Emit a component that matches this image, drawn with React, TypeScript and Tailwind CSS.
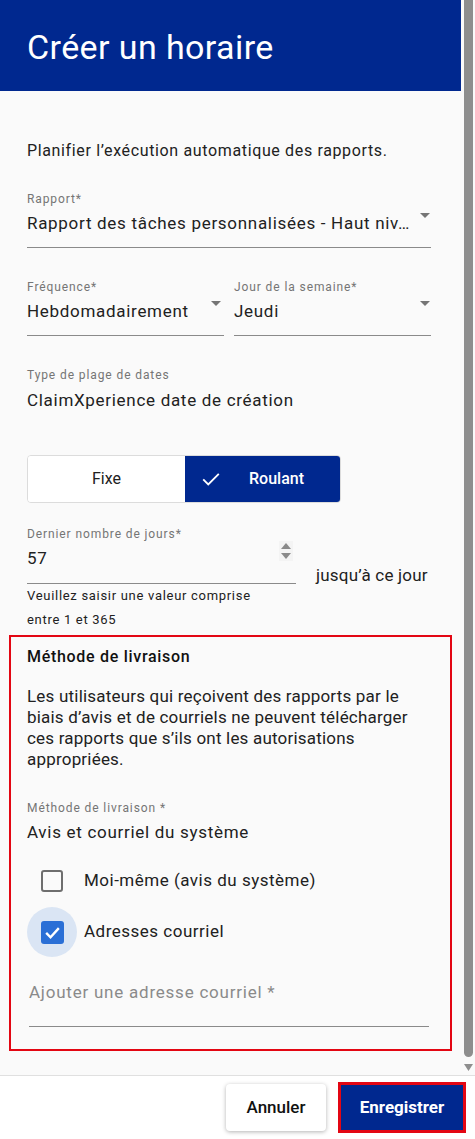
import React from "react";

const Caret = () => (
  <svg width="10" height="5" viewBox="0 0 10 5" className="shrink-0">
    <path d="M0 0 L10 0 L5 5 Z" fill="#757575" />
  </svg>
);

function SelectField({ label, value, className = "" }: { label: string; value: string; className?: string }) {
  return (
    <div className={"border-b border-[#8a8a8a] pb-[12px] " + className}>
      <div className="text-[12px] leading-[16px] tracking-[0.9px] text-[#757575]">{label}</div>
      <div className="mt-[4px] flex items-center justify-between gap-1">
        <span className="truncate text-[17px] leading-[24px] tracking-[0.7px] text-[#212121]">{value}</span>
        <span className="-mt-[16px] mr-[1px]"><Caret /></span>
      </div>
    </div>
  );
}

export default function App() {
  return (
    <div className="flex h-[1139px] w-[475px] flex-col bg-[#fafafa]" style={{ fontFamily: "Roboto, 'Noto Sans', sans-serif" }}>
      <div className="flex h-[1075px] flex-row">
        <div className="flex w-[461px] flex-col">
          <div className="flex h-[91px] items-center bg-[#00288f] pl-[27px] pt-[3px]">
            <h1 className="text-[34px] leading-[40px] font-normal tracking-[0.4px] text-white">Créer un horaire</h1>
          </div>
          <div className="flex flex-col pt-[48px]">
            <div className="px-[27px]">
              <p className="text-[16px] leading-[24px] tracking-[0.64px] text-[#212121]">Planifier l’exécution automatique des rapports.</p>
              <SelectField className="mt-[28px] w-[404px]" label="Rapport*" value="Rapport des tâches personnalisées - Haut niv…" />
              <div className="mt-[31px] flex w-[404px] gap-[10px]">
                <SelectField className="w-[197px] pr-[2px]" label="Fréquence*" value="Hebdomadairement" />
                <SelectField className="w-[197px]" label="Jour de la semaine*" value="Jeudi" />
              </div>
              <div className="mt-[31px]">
                <div className="text-[12px] leading-[16px] tracking-[0.9px] text-[#757575]">Type de plage de dates</div>
                <div className="mt-[5px] text-[17px] leading-[24px] tracking-[0.7px] text-[#212121]">ClaimXperience date de création</div>
              </div>
              <div className="mt-[43px] flex h-[48px] w-[314px] overflow-hidden rounded-[4px] border border-[#dcdcdc]">
                <div className="flex w-[157px] items-center justify-center bg-white text-[16px] text-[#212121]">Fixe</div>
                <div className="flex flex-1 items-center bg-[#00288f] text-[16px] font-medium text-white">
                  <svg width="22" height="22" viewBox="0 0 24 24" className="ml-[15px]">
                    <path d="M3.5 12.5 L9 18 L20.5 6.5" stroke="white" strokeWidth="2" fill="none" />
                  </svg>
                  <span className="ml-[27px]">Roulant</span>
                </div>
              </div>
              <div className="mt-[23px] flex items-end">
                <div className="w-[269px] border-b border-[#8a8a8a] pb-[13px]">
                  <div className="text-[12px] leading-[16px] tracking-[0.9px] text-[#757575]">Dernier nombre de jours*</div>
                  <div className="mt-[4px] flex items-center justify-between">
                    <span className="text-[17px] leading-[24px] tracking-[0.7px] text-[#212121]">57</span>
                    <span className="-mt-[14px] mr-[3px] flex flex-col items-center gap-[4px] bg-[#f4f4f4] px-[2px] py-[2px]">
                      <svg width="10" height="6" viewBox="0 0 10 6"><path d="M0 6 L5 0 L10 6 Z" fill="#8a8a8a" /></svg>
                      <svg width="10" height="6" viewBox="0 0 10 6"><path d="M0 0 L10 0 L5 6 Z" fill="#8a8a8a" /></svg>
                    </span>
                  </div>
                </div>
                <span className="mb-[-3px] ml-[20px] text-[17px] leading-[24px] tracking-[0.2px] text-[#212121]">jusqu’à ce jour</span>
              </div>
              <p className="text-[13px] leading-[24px] tracking-[0.7px] text-[#212121]">Veuillez saisir une valeur comprise<br />entre 1 et 365</p>
            </div>
            <div className="mx-[9px] mt-[3px] border-2 border-[#e30613] pb-[22px] pl-[16px] pr-[24px] pt-[8px]">
              <h2 className="text-[16px] leading-[24px] font-medium tracking-[0.7px] text-[#111]">Méthode de livraison</h2>
              <p className="mt-[17px] text-[17px] leading-[21px] tracking-[0.2px] text-[#212121]">
                Les utilisateurs qui reçoivent des rapports par le biais d’avis et de courriels ne peuvent télécharger ces rapports que s’ils ont les autorisations appropriées.
              </p>
              <div className="mt-[30px] text-[12px] leading-[16px] tracking-[0.9px] text-[#757575]">Méthode de livraison *</div>
              <div className="mt-[4px] text-[17px] leading-[24px] tracking-[0.7px] text-[#212121]">Avis et courriel du système</div>
              <div className="mt-[12px] flex h-[50px] items-center">
                <div className="flex h-[50px] w-[50px] items-center justify-center">
                  <div className="h-[22px] w-[22px] rounded-[3px] border-2 border-[#6e6e6e]" />
                </div>
                <span className="ml-[7px] text-[17px] tracking-[0.5px] text-[#212121]">Moi-même (avis du système)</span>
              </div>
              <div className="mt-[1px] flex h-[50px] items-center">
                <div className="flex h-[50px] w-[50px] items-center justify-center rounded-full bg-[#dae5f4]">
                  <div className="flex h-[23px] w-[23px] items-center justify-center rounded-[3px] bg-[#2a6fd6]">
                    <svg width="19" height="19" viewBox="0 0 24 24">
                      <path d="M4 12.5 L9.5 18 L20 6.5" stroke="white" strokeWidth="3" fill="none" />
                    </svg>
                  </div>
                </div>
                <span className="ml-[7px] text-[17px] tracking-[0.5px] text-[#212121]">Adresses courriel</span>
              </div>
              <div className="mt-[23px] ml-[2px] w-[400px] border-b border-[#8a8a8a] pb-[21px]">
                <span className="text-[17px] leading-[24px] tracking-[0.77px] text-[#8a8a8a]">Ajouter une adresse courriel *</span>
              </div>
            </div>
          </div>
        </div>
        <div className="flex w-[14px] flex-col items-start">
          <div className="ml-[3px] h-[1057px] w-[9px] rounded-b-[5px] bg-[#8e8e8e]" />
          <svg width="9" height="7" viewBox="0 0 9 7" className="ml-[3px] mt-[7px]"><path d="M0 0 L9 0 L4.5 7 Z" fill="#8e8e8e" /></svg>
        </div>
      </div>
      <div className="flex flex-1 items-center justify-end gap-[12px] border-t border-[#e0e0e0] bg-white pr-[9px]">
        <button className="h-[47px] w-[100px] rounded-[4px] bg-white text-[17px] font-medium text-[#111] shadow-[0_1px_4px_rgba(0,0,0,0.3)]">Annuler</button>
        <div className="border-[3px] border-[#e30613]">
          <button className="h-[45px] w-[122px] bg-[#00288f] text-[17px] font-bold text-white">Enregistrer</button>
        </div>
      </div>
    </div>
  );
}
